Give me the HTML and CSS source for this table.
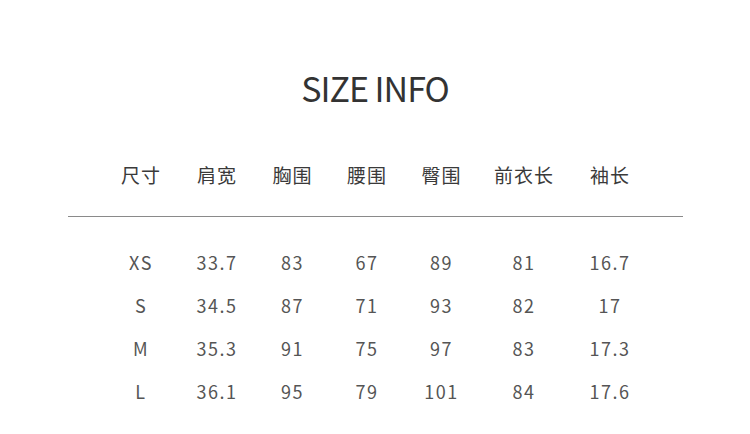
FILE: index.html
```html
<!DOCTYPE html>
<html lang="zh">
<head>
<meta charset="utf-8">
<title>SIZE INFO</title>
<link rel="stylesheet" href="styles.css">
</head>
<body>
<main class="page">
  <h1 class="title">SIZE INFO</h1>
  <div class="table">
    <div class="row head">
      <span>尺寸</span><span>肩宽</span><span>胸围</span><span>腰围</span><span>臀围</span><span>前衣长</span><span>袖长</span>
    </div>
    <div class="rule"></div>
    <div class="body">
      <div class="row"><span>XS</span><span>33.7</span><span>83</span><span>67</span><span>89</span><span>81</span><span>16.7</span></div>
      <div class="row"><span>S</span><span>34.5</span><span>87</span><span>71</span><span>93</span><span>82</span><span>17</span></div>
      <div class="row"><span>M</span><span>35.3</span><span>91</span><span>75</span><span>97</span><span>83</span><span>17.3</span></div>
      <div class="row"><span>L</span><span>36.1</span><span>95</span><span>79</span><span>101</span><span>84</span><span>17.6</span></div>
    </div>
  </div>
</main>
</body>
</html>
```
FILE: styles.css
```css
html, body {
  margin: 0;
  padding: 0;
  background: #ffffff;
}
body {
  font-family: "Noto Sans CJK SC", "Noto Sans", sans-serif;
  color: #444;
  width: 750px;
  height: 434px;
  overflow: hidden;
}
.page {
  display: flex;
  flex-direction: column;
  align-items: center;
  padding-top: 63px;
}
.title {
  margin: 0;
  font-weight: 400;
  font-size: 34px;
  line-height: 50px;
  color: #333;
  letter-spacing: -1px;
}
.table {
  width: 615px;
  margin-top: 49px;
  display: flex;
  flex-direction: column;
}
.row {
  display: grid;
  grid-template-columns: 76px 76px 75px 74px 75px 90px 82px;
  padding-left: 35px;
  text-align: center;
}
.row span {
  text-indent: 1px;
}
.head {
  font-size: 19px;
  line-height: 26px;
  letter-spacing: 1px;
  color: #3a3a3a;
}
.rule {
  height: 1px;
  background: #8a8a8a;
  margin-top: 28px;
}
.body {
  display: flex;
  flex-direction: column;
  gap: 17px;
  margin-top: 32px;
}
.body .row {
  font-size: 18px;
  line-height: 26px;
  letter-spacing: 1.5px;
  color: #555;
}
```
